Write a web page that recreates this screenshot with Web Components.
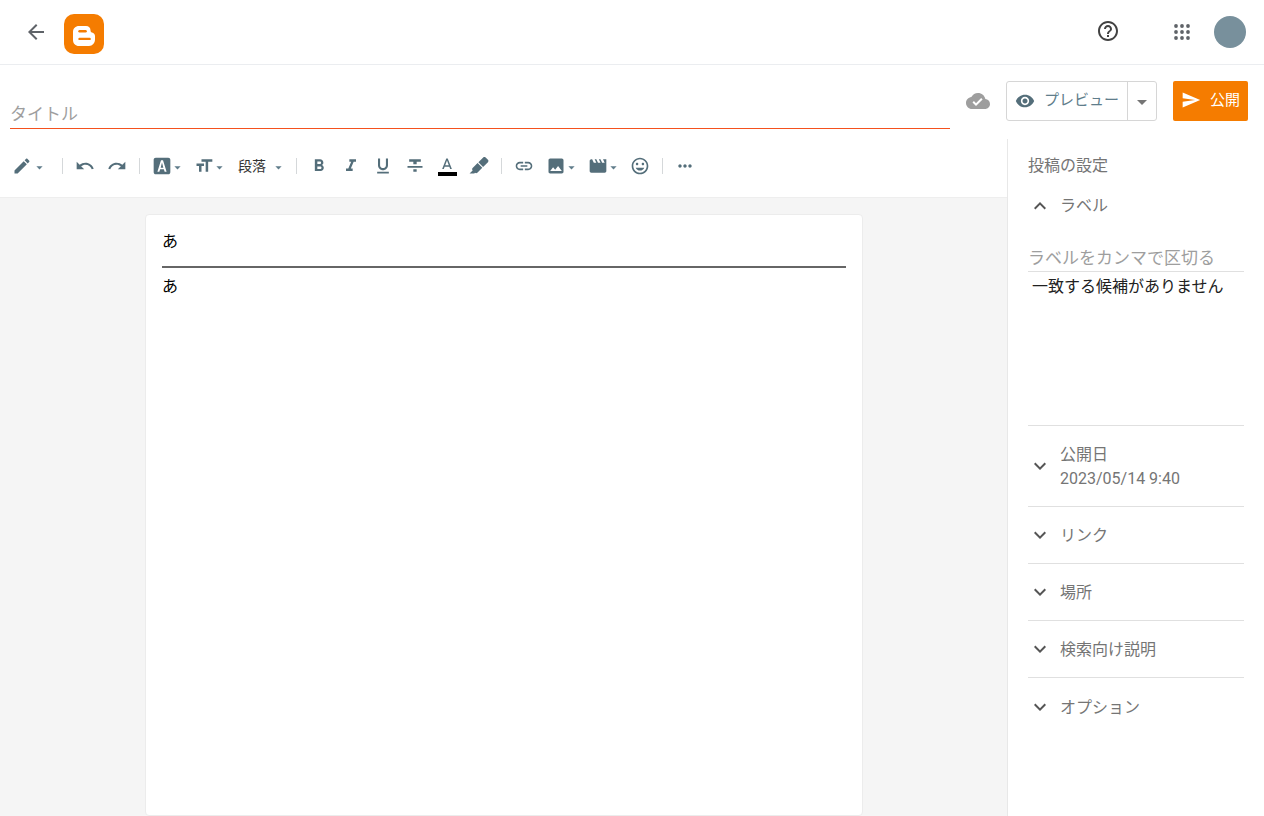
<!DOCTYPE html>
<html lang="ja">
<head>
<meta charset="utf-8">
<title>Blogger</title>
<style>
	html, body { margin: 0; height: 100%; overflow: hidden; background: #fff; }
	body { font-family: Roboto, "Noto Sans CJK JP", sans-serif; }
</style>
</head>
<body>
<post-editor></post-editor>
<script>
const ICONS = {
	back: 'M20 11H7.83l5.59-5.59L12 4l-8 8 8 8 1.41-1.41L7.83 13H20v-2z',
	help: 'M11 18h2v-2h-2v2zm1-16C6.48 2 2 6.48 2 12s4.48 10 10 10 10-4.48 10-10S17.52 2 12 2zm0 18c-4.41 0-8-3.59-8-8s3.59-8 8-8 8 3.59 8 8-3.59 8-8 8zm0-14c-2.21 0-4 1.79-4 4h2c0-1.1.9-2 2-2s2 .9 2 2c0 2-3 1.75-3 5h2c0-2.25 3-2.5 3-5 0-2.21-1.79-4-4-4z',
	cloud: 'M19.35 10.04C18.67 6.59 15.64 4 12 4 9.11 4 6.6 5.64 5.35 8.04 2.34 8.36 0 10.91 0 14c0 3.31 2.69 6 6 6h13c2.76 0 5-2.24 5-5 0-2.64-2.05-4.78-4.65-4.96zM10 17l-3.5-3.5 1.41-1.41L10 14.17 15.18 9l1.41 1.41L10 17z',
	eye: 'M12 4.5C7 4.5 2.73 7.61 1 12c1.73 4.39 6 7.5 11 7.5s9.27-3.11 11-7.5c-1.73-4.39-6-7.5-11-7.5zM12 17c-2.76 0-5-2.24-5-5s2.24-5 5-5 5 2.24 5 5-2.24 5-5 5zm0-8c-1.66 0-3 1.34-3 3s1.34 3 3 3 3-1.34 3-3-1.34-3-3-3z',
	send: 'M2.01 21L23 12 2.01 3 2 10l15 2-15 2z',
	caret: 'M7 10l5 5 5-5z',
	edit: 'M3 17.25V21h3.75L17.81 9.94l-3.75-3.75L3 17.25zM20.71 7.04c.39-.39.39-1.02 0-1.41l-2.34-2.34c-.39-.39-1.02-.39-1.41 0l-1.83 1.83 3.75 3.75 1.83-1.83z',
	undo: 'M12.5 8c-2.65 0-5.05.99-6.9 2.6L2 7v9h9l-3.62-3.62c1.39-1.16 3.16-1.88 5.12-1.88 3.54 0 6.55 2.31 7.6 5.5l2.37-.78C21.08 11.03 17.15 8 12.5 8z',
	redo: 'M18.4 10.6C16.55 8.99 14.15 8 11.5 8c-4.65 0-8.58 3.03-9.96 7.22L3.9 16c1.05-3.19 4.05-5.5 7.6-5.5 1.95 0 3.73.72 5.12 1.88L13 16h9V7l-3.6 3.6z',
	fontbox: 'M4.5 2h15C20.9 2 22 3.1 22 4.5v15c0 1.4-1.1 2.5-2.500 2.500h-15C3.100 22 2 20.900 2 19.500v-15C2 3.100 3.100 2 4.500 2zm6.300 3L6.500 19h2.300l1-3h4.400l1 3h2.300L13.200 5h-2.400zM12 7.800l1.600 6.200h-3.200L12 7.800z',
	size: 'M9 4v3h5v12h3V7h5V4H9zm-6 8h3v7h3v-7h3V9H3v3z',
	bold: 'M15.6 10.79c.97-.67 1.65-1.77 1.65-2.79 0-2.26-1.75-4-4-4H7v14h7.04c2.09 0 3.71-1.7 3.71-3.79 0-1.52-.86-2.82-2.15-3.42zM10 6.5h3c.83 0 1.5.67 1.5 1.5s-.67 1.5-1.5 1.5h-3v-3zm3.5 9H10v-3h3.5c.83 0 1.5.67 1.5 1.5s-.67 1.5-1.5 1.5z',
	italic: 'M10 4v3h2.21l-3.42 8H6v3h8v-3h-2.21l3.42-8H18V4z',
	underline: 'M12 17c3.31 0 6-2.69 6-6V3h-2.5v8c0 1.93-1.57 3.5-3.5 3.5S8.5 12.93 8.5 11V3H6v8c0 3.31 2.69 6 6 6zm-7 2v2h14v-2H5z',
	strike: 'M10 19h4v-3h-4v3zM5 4v3h5v3h4V7h5V4H5zM3 14h18v-2H3v2z',
	color: 'M11 2L5.5 16h2.25l1.12-3h6.25l1.12 3h2.25L13 2h-2zm-1.38 9L12 4.67 14.38 11H9.62z',
	marker: 'M18.5 1.15c-.53 0-1.04.19-1.43.58l-5.81 5.82 5.65 5.65 5.82-5.81c.77-.78.77-2.04 0-2.83l-2.84-2.83c-.39-.39-.89-.58-1.39-.58M10.3 8.5l-5.96 5.96c-.78.78-.78 2.04.02 2.85C3.14 18.54 1.9 19.77.67 21h5.66l.86-.86c.78.76 2.03.75 2.81-.02l5.95-5.96L10.3 8.5z',
	link: 'M3.9 12c0-1.71 1.39-3.1 3.1-3.1h4V7H7c-2.76 0-5 2.24-5 5s2.24 5 5 5h4v-1.9H7c-1.71 0-3.1-1.39-3.1-3.1zM8 13h8v-2H8v2zm9-6h-4v1.9h4c1.71 0 3.1 1.39 3.1 3.1s-1.39 3.1-3.1 3.1h-4V17h4c2.76 0 5-2.24 5-5s-2.24-5-5-5z',
	image: 'M21 19V5c0-1.1-.9-2-2-2H5c-1.1 0-2 .9-2 2v14c0 1.1.9 2 2 2h14c1.1 0 2-.9 2-2zM8.5 13.5l2.5 3.01L14.5 12l4.5 6H5l3.5-4.5z',
	movie: 'M18 4l2 4h-3l-2-4h-2l2 4h-3l-2-4H8l2 4H7L5 4H4c-1.1 0-1.99.9-1.99 2L2 18c0 1.1.9 2 2 2h16c1.1 0 2-.9 2-2V4h-4z',
	smile: 'M11.99 2C6.47 2 2 6.48 2 12s4.47 10 9.99 10C17.52 22 22 17.52 22 12S17.52 2 11.99 2zM12 20c-4.42 0-8-3.58-8-8s3.58-8 8-8 8 3.58 8 8-3.58 8-8 8zm3.5-9c.83 0 1.5-.67 1.5-1.5S16.33 8 15.5 8 14 8.67 14 9.5s.67 1.5 1.5 1.5zm-7 0c.83 0 1.5-.67 1.5-1.5S9.33 8 8.5 8 7 8.67 7 9.5 7.67 11 8.5 11zm3.5 6.5c2.33 0 4.31-1.46 5.11-3.5H6.89c.8 2.04 2.78 3.5 5.11 3.5z',
	more: 'M6 10c-1.1 0-2 .9-2 2s.9 2 2 2 2-.9 2-2-.9-2-2-2zm12 0c-1.1 0-2 .9-2 2s.9 2 2 2 2-.9 2-2-.9-2-2-2zm-6 0c-1.1 0-2 .9-2 2s.9 2 2 2 2-.9 2-2-.9-2-2-2z',
	down: 'M16.59 8.59L12 13.17 7.41 8.59 6 10l6 6 6-6z',
	up: 'M12 8l-6 6 1.41 1.41L12 10.83l4.59 4.58L18 14z'
};

class UiIcon extends HTMLElement {
	constructor() {
		super();
		let size = this.getAttribute('size') || 20;
		let fill = this.getAttribute('fill') || '#546e7a';
		let d = ICONS[this.getAttribute('name')];
		this.attachShadow({mode: 'open'}).innerHTML = `
			<style>
				:host { display: block; flex: none; width: ${size}px; height: ${size}px; }
				svg { display: block; width: 100%; height: 100%; fill: ${fill}; }
			</style>
			<svg viewBox="0 0 24 24"><path d="${d}"></path></svg>
		`;
	}
}
customElements.define('ui-icon', UiIcon);

// plain square toolbar button; with caret="N" an icon and a dropdown caret pulled N px left
class ToolBtn extends HTMLElement {
	constructor() {
		super();
		let hasCaret = this.hasAttribute('caret');
		let name = this.getAttribute('icon');
		this.attachShadow({mode: 'open'}).innerHTML = `
			<style>
				:host {
					display: flex;
					align-items: center;
					flex: none;
					box-sizing: border-box;
					height: 32px;
					width: ${hasCaret ? '40px' : '32px'};
					justify-content: ${hasCaret ? 'flex-start' : 'center'};
					padding-left: ${this.getAttribute('pad') || 0}px;
					position: relative;
				}
				.caret { margin: 3px 0 0 -${this.getAttribute('caret') || 0}px; }
			</style>
			<ui-icon name="${name}" size="${this.getAttribute('size') || 20}"></ui-icon>
			<slot></slot>
			${hasCaret ? '<ui-icon class="caret" name="caret" size="15" fill="#607d8b"></ui-icon>' : ''}
		`;
	}
}
customElements.define('tool-btn', ToolBtn);

class ToolSep extends HTMLElement {
	constructor() {
		super();
		this.attachShadow({mode: 'open'}).innerHTML = `
			<style>
				:host { display: block; flex: none; width: 1px; height: 16px; background: #d5d8da; }
			</style>
		`;
	}
}
customElements.define('tool-sep', ToolSep);

class EditToolbar extends HTMLElement {
	constructor() {
		super();
		this.attachShadow({mode: 'open'}).innerHTML = `
			<style>
				:host {
					display: flex;
					align-items: center;
					flex: none;
					box-sizing: border-box;
					height: 59px;
					padding: 0 0 5px 6px;
					background: #fff;
					border-bottom: 1px solid #eeeeee;
				}
				.para {
					display: flex;
					align-items: center;
					width: 58px;
					margin-left: 9px;
					font-size: 14px;
					color: #333;
				}
				.para span { width: 33px; margin-top: -2px; }
				.para ui-icon { margin-top: 3px; }
				.bar {
					position: absolute;
					left: 7px;
					right: 6px;
					bottom: 6px;
					height: 4px;
					background: #000;
				}
			</style>
			<tool-btn icon="edit" caret="0" pad="6" style="width: 44px"></tool-btn>
			<tool-sep style="margin: 0 6px 0 12px"></tool-sep>
			<tool-btn icon="undo"></tool-btn>
			<tool-btn icon="redo"></tool-btn>
			<tool-sep style="margin: 0 7px 0 6px"></tool-sep>
			<tool-btn icon="fontbox" caret="2" pad="5"></tool-btn>
			<tool-btn icon="size" caret="2" pad="5" style="margin-left: 2px"></tool-btn>
			<div class="para"><span>段落</span><ui-icon name="caret" size="15" fill="#607d8b"></ui-icon></div>
			<tool-sep style="margin: 0 6px 0 0"></tool-sep>
			<tool-btn icon="bold"></tool-btn>
			<tool-btn icon="italic"></tool-btn>
			<tool-btn icon="underline"></tool-btn>
			<tool-btn icon="strike"></tool-btn>
			<tool-btn icon="color" size="18"><div class="bar"></div></tool-btn>
			<tool-btn icon="marker"></tool-btn>
			<tool-sep style="margin: 0 6px"></tool-sep>
			<tool-btn icon="link"></tool-btn>
			<tool-btn icon="image" caret="2" pad="6"></tool-btn>
			<tool-btn icon="movie" caret="2" pad="4" style="margin-left: 4px"></tool-btn>
			<tool-btn icon="smile"></tool-btn>
			<tool-sep style="margin: 0 6px"></tool-sep>
			<tool-btn icon="more"></tool-btn>
		`;
	}
}
customElements.define('edit-toolbar', EditToolbar);

class AppHeader extends HTMLElement {
	constructor() {
		super();
		this.attachShadow({mode: 'open'}).innerHTML = `
			<style>
				:host {
					display: flex;
					align-items: center;
					flex: none;
					box-sizing: border-box;
					height: 65px;
					padding: 0 18px 1px 24px;
					border-bottom: 1px solid #ebedf0;
				}
				.logo { margin: 5px 0 0 16px; width: 40px; height: 40px; display: block; }
				.spacer { flex: 1; }
				.apps { display: block; width: 20px; height: 20px; margin: 1px 22px 0 52px; }
				.avatar { width: 32px; height: 32px; border-radius: 50%; background: #78909c; }
				.help { margin-top: -1px; }
				.back { margin-top: 1px; }
			</style>
			<ui-icon class="back" name="back" size="24" fill="#5f6368"></ui-icon>
			<svg class="logo" viewBox="0 0 40 40">
				<rect width="40" height="40" rx="10" fill="#f57c00"></rect>
				<path fill="#fff" d="M15 12h7c2.800 0 4.500 1.800 4.500 4.300 0 1.300.4 1.900 1.500 2.200 1.700.5 3 1.500 3 3.500v3.500c0 3.500-2.500 6.500-6 6.500H15c-3.500 0-6-2.500-6-6V18c0-3.500 2.500-6 6-6z"></path>
				<rect x="14.300" y="16" width="8.500" height="2.400" rx="1.200" fill="#f57c00"></rect>
				<rect x="14.300" y="23.700" width="12.500" height="2.400" rx="1.200" fill="#f57c00"></rect>
			</svg>
			<div class="spacer"></div>
			<ui-icon class="help" name="help" size="24" fill="#424242"></ui-icon>
			<svg class="apps" viewBox="0 0 20 20" fill="#5f6368">
				<circle cx="4" cy="4" r="1.900"></circle><circle cx="10" cy="4" r="1.900"></circle><circle cx="16" cy="4" r="1.900"></circle>
				<circle cx="4" cy="10" r="1.900"></circle><circle cx="10" cy="10" r="1.900"></circle><circle cx="16" cy="10" r="1.900"></circle>
				<circle cx="4" cy="16" r="1.900"></circle><circle cx="10" cy="16" r="1.900"></circle><circle cx="16" cy="16" r="1.900"></circle>
			</svg>
			<div class="avatar"></div>
		`;
	}
}
customElements.define('app-header', AppHeader);

class TitleBar extends HTMLElement {
	constructor() {
		super();
		this.attachShadow({mode: 'open'}).innerHTML = `
			<style>
				:host {
					display: flex;
					align-items: flex-start;
					flex: none;
					box-sizing: border-box;
					height: 74px;
					padding: 16px 16px 0 10px;
				}
				.title {
					box-sizing: border-box;
					width: 940px;
					height: 48px;
					padding-top: 21px;
					line-height: 24px;
					font-size: 17px;
					color: #9e9e9e;
					border-bottom: 1px solid #f4511e;
				}
				.cloud { margin: 8px 0 0 16px; }
				.preview {
					display: flex;
					align-items: center;
					box-sizing: border-box;
					height: 40px;
					width: 151px;
					margin-left: 16px;
					border: 1px solid #d6d6d6;
					border-radius: 3px;
					font-size: 15px;
					color: #607d8b;
				}
				.preview .eye { margin-left: 8px; }
				.preview span { margin-left: 9px; width: 75px; margin-top: -5px; }
				.preview .drop {
					display: flex;
					align-items: center;
					justify-content: center;
					margin-left: 8px;
					height: 100%;
					flex: 1;
					border-left: 1px solid #d6d6d6;
				}
				.preview .drop ui-icon { margin-top: 2px; }
				.publish {
					display: flex;
					align-items: center;
					box-sizing: border-box;
					height: 40px;
					width: 75px;
					margin-left: 16px;
					padding-left: 8px;
					background: #f57c00;
					border-radius: 2px;
					font-size: 15px;
					color: #fff;
				}
				.publish span { margin-left: 9px; margin-top: -5px; }
				.publish ui-icon { margin-top: -3px; }
			</style>
			<div class="title">タイトル</div>
			<ui-icon class="cloud" name="cloud" size="24" fill="#9e9e9e"></ui-icon>
			<div class="preview">
				<ui-icon class="eye" name="eye" size="20" fill="#546e7a"></ui-icon>
				<span>プレビュー</span>
				<div class="drop"><ui-icon name="caret" size="24" fill="#757575"></ui-icon></div>
			</div>
			<div class="publish">
				<ui-icon name="send" size="20" fill="#fff"></ui-icon>
				<span>公開</span>
			</div>
		`;
	}
}
customElements.define('title-bar', TitleBar);

class PostBody extends HTMLElement {
	constructor() {
		super();
		this.attachShadow({mode: 'open'}).innerHTML = `
			<style>
				:host {
					display: block;
					flex: 1;
					min-height: 0;
					background: #f5f5f5;
					padding: 16px 0 0 145px;
				}
				.page {
					box-sizing: border-box;
					width: 718px;
					height: 602px;
					padding: 15px 16px 0;
					background: #fff;
					border: 1px solid #ececec;
					border-radius: 4px;
					font-size: 16px;
					line-height: 24px;
					color: #000;
				}
				hr { margin: 12px 0 7px; border: 0; height: 2px; background: #666; }
			</style>
			<div class="page">
				<div>あ</div>
				<hr>
				<div>あ</div>
			</div>
		`;
	}
}
customElements.define('post-body', PostBody);

class SettingRow extends HTMLElement {
	constructor() {
		super();
		let open = this.hasAttribute('open');
		this.attachShadow({mode: 'open'}).innerHTML = `
			<style>
				:host {
					display: flex;
					align-items: center;
					box-sizing: border-box;
					min-height: 57px;
					font-size: 16px;
					color: #757575;
					border-bottom: 1px solid #e0e0e0;
				}
				:host([open]) { border-bottom: 0; min-height: 0; height: 24px; }
				.text { margin: ${open ? 0 : 2}px 0 0 8px; line-height: 24px; }
			</style>
			<ui-icon name="${open ? 'up' : 'down'}" size="24" fill="#555"></ui-icon>
			<div class="text"><slot></slot></div>
		`;
	}
}
customElements.define('setting-row', SettingRow);

class SettingsPanel extends HTMLElement {
	constructor() {
		super();
		this.attachShadow({mode: 'open'}).innerHTML = `
			<style>
				:host {
					display: block;
					flex: none;
					box-sizing: border-box;
					width: 257px;
					padding: 15px 20px 0 20px;
					border-left: 1px solid #e8e8e8;
					background: #fff;
				}
				h2 { margin: 0 0 16px; font-size: 16px; font-weight: 400; line-height: 24px; color: #757575; }
				.label-open { height: 231px; border-bottom: 1px solid #e0e0e0; }
				.input {
					box-sizing: border-box;
					height: 31px;
					margin-top: 23px;
					line-height: 34px;
					font-size: 17px;
					color: #9e9e9e;
					border-bottom: 1px solid #e0e0e0;
				}
				.none { margin: 3px 0 0 4px; line-height: 24px; font-size: 16px; color: #212121; }
				.date { height: 81px; }
			</style>
			<h2>投稿の設定</h2>
			<div class="label-open">
				<setting-row open>ラベル</setting-row>
				<div class="input">ラベルをカンマで区切る</div>
				<div class="none">一致する候補がありません</div>
			</div>
			<setting-row class="date">公開日<br>2023/05/14 9:40</setting-row>
			<setting-row>リンク</setting-row>
			<setting-row>場所</setting-row>
			<setting-row>検索向け説明</setting-row>
			<setting-row style="border-bottom: 0">オプション</setting-row>
		`;
	}
}
customElements.define('settings-panel', SettingsPanel);

class PostEditor extends HTMLElement {
	constructor() {
		super();
		this.attachShadow({mode: 'open'}).innerHTML = `
			<style>
				:host { display: flex; flex-direction: column; height: 816px; overflow: hidden; }
				.main { display: flex; flex: 1; min-height: 0; }
				.left { display: flex; flex-direction: column; flex: 1; min-width: 0; }
			</style>
			<app-header></app-header>
			<title-bar></title-bar>
			<div class="main">
				<div class="left">
					<edit-toolbar></edit-toolbar>
					<post-body></post-body>
				</div>
				<settings-panel></settings-panel>
			</div>
		`;
	}
}
customElements.define('post-editor', PostEditor);
</script>
</body>
</html>
